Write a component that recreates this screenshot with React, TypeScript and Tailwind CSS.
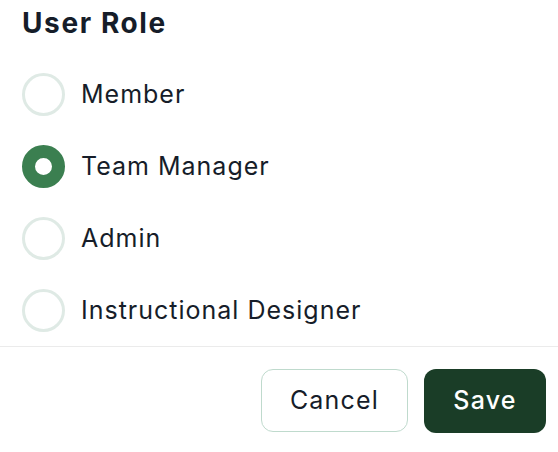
import {useState} from "react";

const roles = ["Member", "Team Manager", "Admin", "Instructional Designer"];

export default function App() {
    const [role, setRole] = useState("Team Manager");

    return (
        <div className="w-[558px] h-[452px] bg-white text-[#161d29] font-['Inter',sans-serif] overflow-hidden">
            <h2 className="pl-[22px] pt-[9px] text-[28px] leading-[28px] font-bold tracking-[1.6px] h-[58px]">
                User Role
            </h2>
            <div className="flex flex-col">
                {roles.map((r) => {
                    const checked = role === r;
                    return (
                        <button key={r} onClick={() => setRole(r)}
                                className="flex items-center h-[72px] pl-[22px] gap-[16px] text-left">
                            <span className={`w-[43px] h-[43px] rounded-full shrink-0 ${
                                checked ? "border-[13px] border-[#3b7f50] bg-white" : "border-[3px] border-[#dfeae5] bg-white"
                            }`}/>
                            <span className="text-[25px] leading-none tracking-[1px]">{r}</span>
                        </button>
                    );
                })}
            </div>
            <div className="border-t border-[#ebebeb] flex justify-end gap-[16px] pr-[12px] pt-[22px]">
                <button className="w-[147px] h-[63px] rounded-[12px] border border-[#bfdacd] text-[25px] tracking-[1.2px] text-[#161d29]">
                    Cancel
                </button>
                <button className="w-[122px] h-[64px] rounded-[12px] bg-[#1a3d27] text-[25px] tracking-[1.2px] text-white font-medium">
                    Save
                </button>
            </div>
        </div>
    );
}
